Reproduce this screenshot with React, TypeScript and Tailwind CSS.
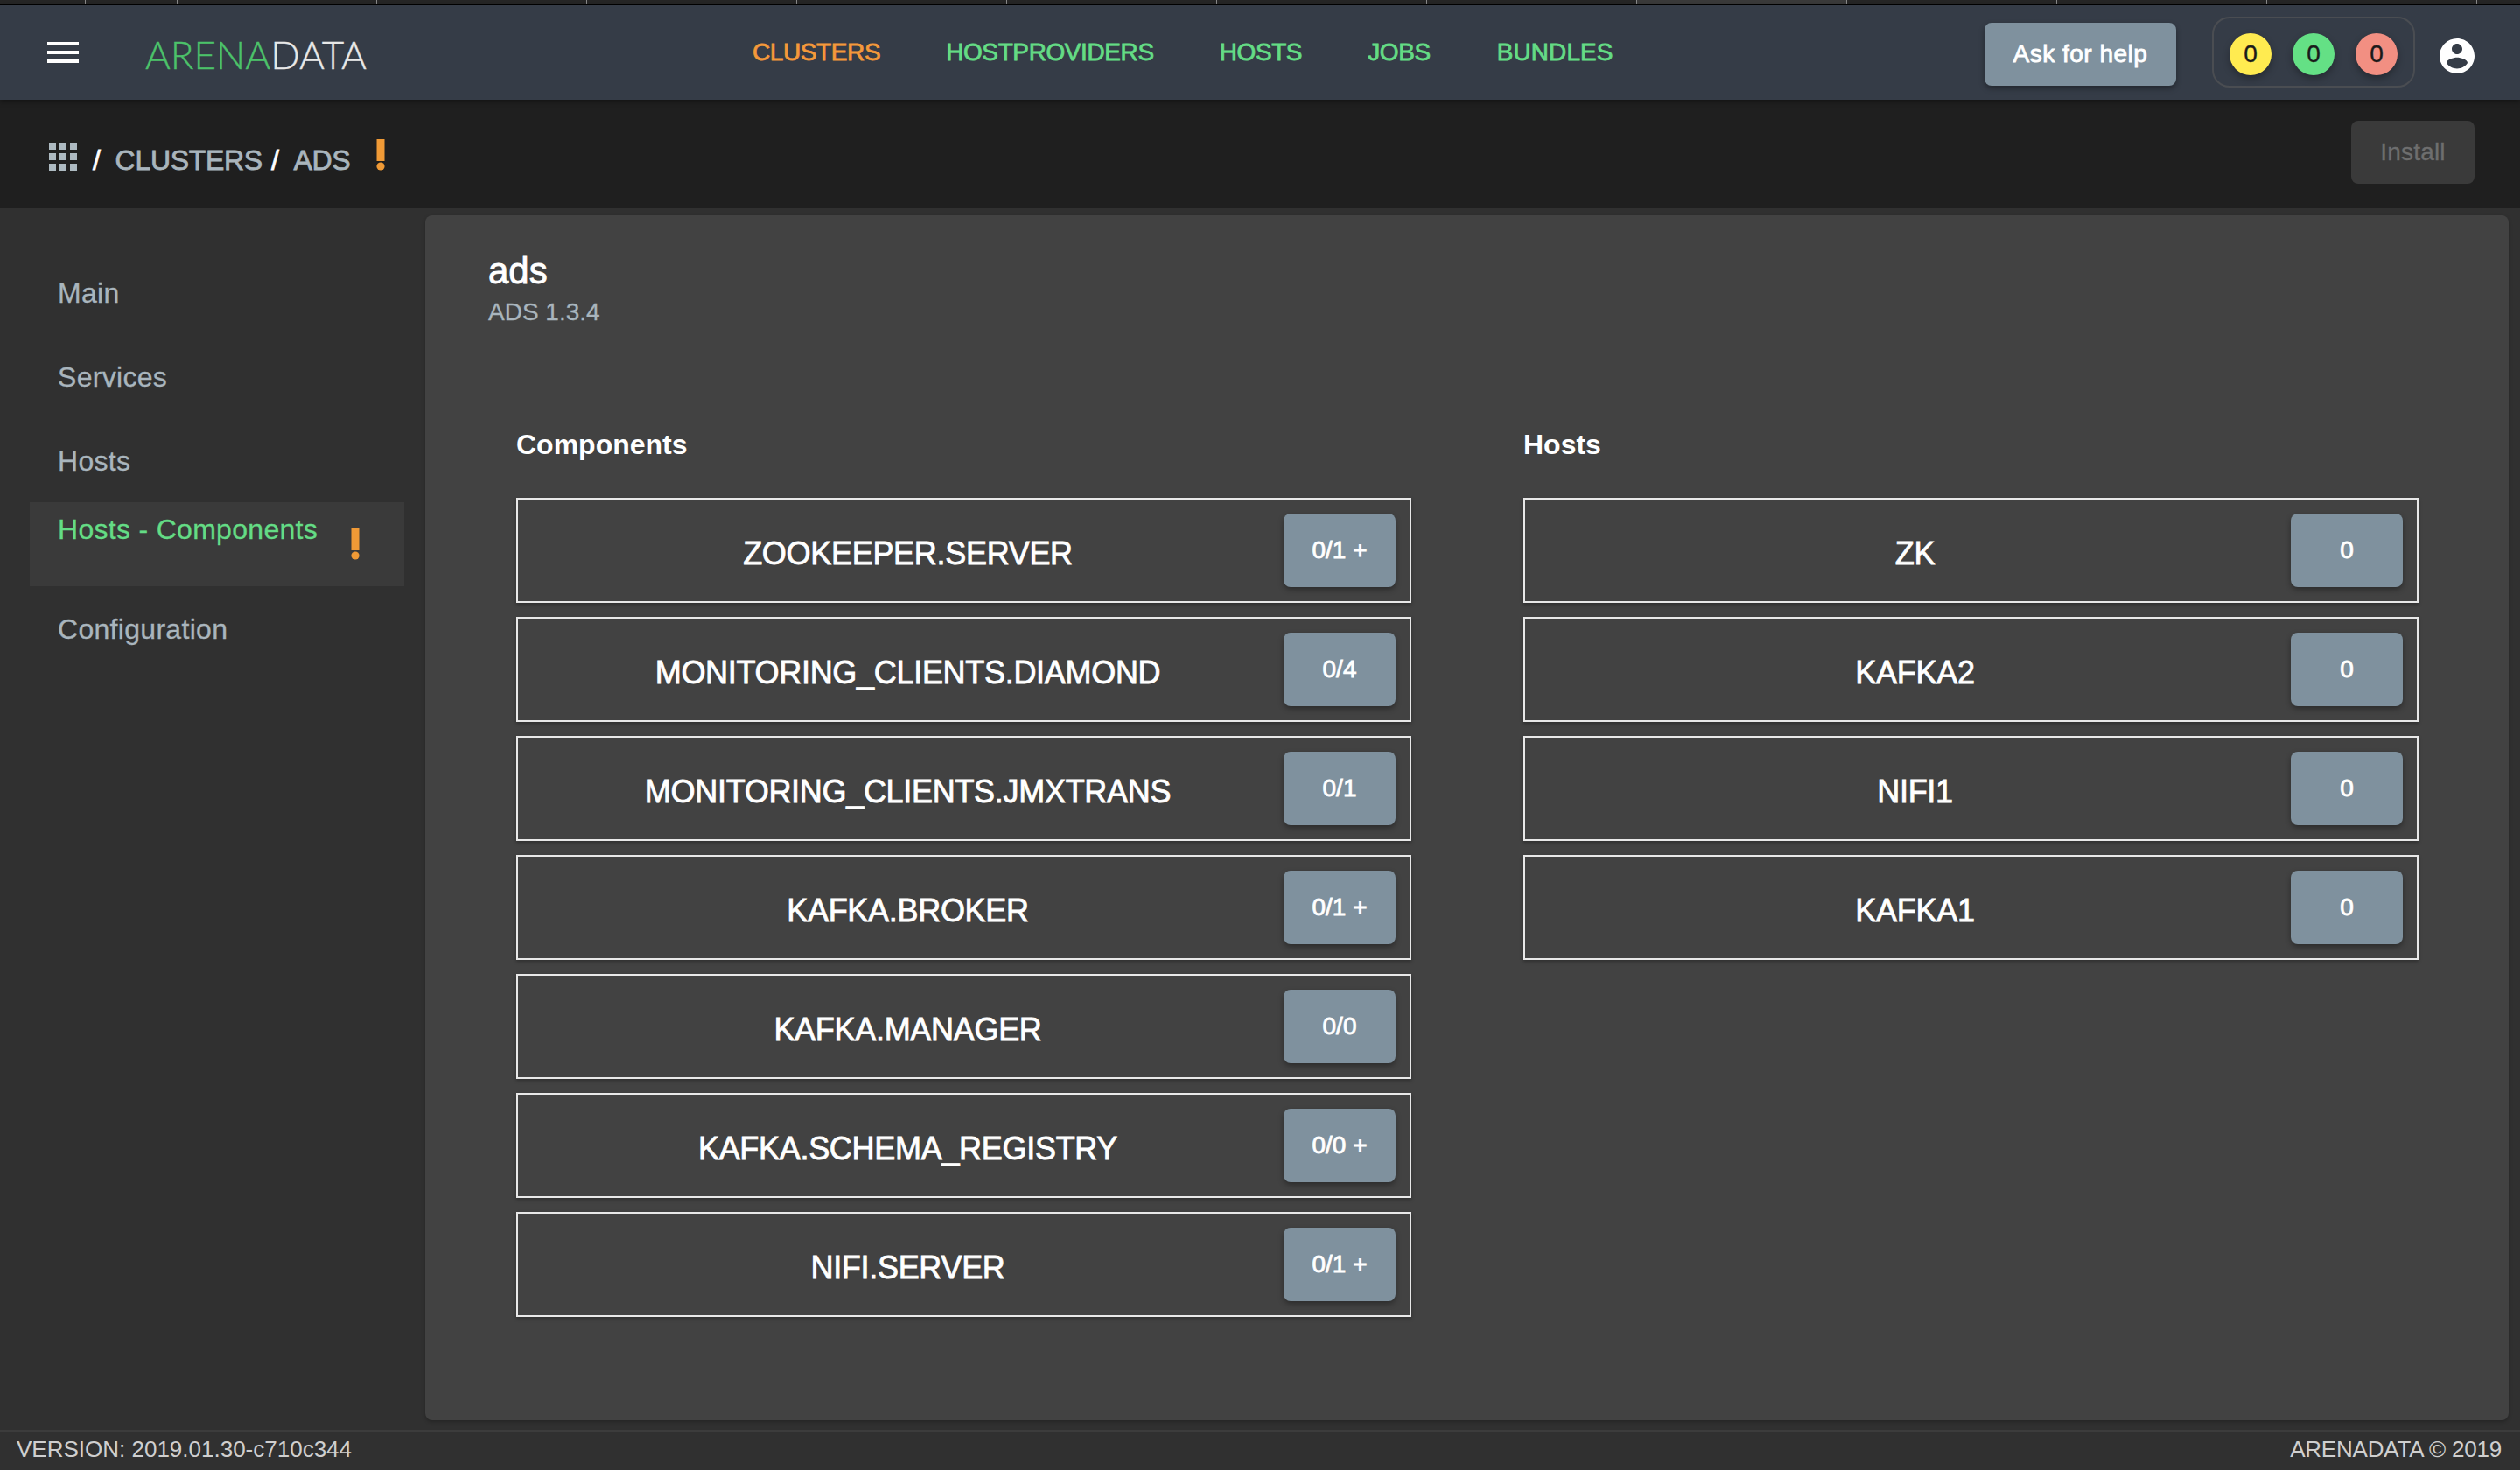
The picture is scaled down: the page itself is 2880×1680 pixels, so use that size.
const components = [
  ["ZOOKEEPER.SERVER", "0/1 +"],
  ["MONITORING_CLIENTS.DIAMOND", "0/4"],
  ["MONITORING_CLIENTS.JMXTRANS", "0/1"],
  ["KAFKA.BROKER", "0/1 +"],
  ["KAFKA.MANAGER", "0/0"],
  ["KAFKA.SCHEMA_REGISTRY", "0/0 +"],
  ["NIFI.SERVER", "0/1 +"],
];
const hosts = [["ZK", "0"], ["KAFKA2", "0"], ["NIFI1", "0"], ["KAFKA1", "0"]];
const ticks = [97, 202, 430, 670, 910, 1150, 1390, 1630, 1870, 2110, 2350, 2590, 2830];
const medium = "[-webkit-text-stroke-width:0.8px]";
const soft = "[-webkit-text-stroke-width:0.3px]";

function Bang() {
  return (
    <svg width="10" height="36" viewBox="0 0 10 36" className="block shrink-0">
      <rect x="0.5" y="0" width="9" height="25" fill="#f09a36" />
      <circle cx="5" cy="31" r="4.6" fill="#f09a36" />
    </svg>
  );
}

function Row({ name, count }: { name: string; count: string }) {
  return (
    <div className="flex h-[120px] w-[1023px] items-center border-2 border-[#e8e8e8] pl-4 pr-4 shadow-[0_2px_4px_rgba(0,0,0,0.3)]">
      <div className={`flex-1 pt-[8px] text-center text-[36px] tracking-[-0.3px] text-white ${medium}`}>{name}</div>
      <div
        className={`flex h-[84px] min-w-[128px] items-center justify-center rounded-lg bg-[#7f919e] px-8 text-[28px] text-white shadow-[0_3px_6px_rgba(0,0,0,0.35)] ${medium}`}
      >
        {count}
      </div>
    </div>
  );
}

function Dot({ color }: { color: string }) {
  return (
    <div
      className={`flex h-12 w-12 items-center justify-center rounded-full text-[28px] text-[#1a1a1a] shadow-[0_4px_8px_rgba(0,0,0,0.3)] ${soft} ${color}`}
    >
      0
    </div>
  );
}

function NavItem({ label }: { label: string }) {
  return <div className={`flex h-24 items-center pl-8 text-[32px] tracking-[0.3px] text-[#a9b5bd] ${soft}`}>{label}</div>;
}

export default function App() {
  return (
    <div className="flex h-screen flex-col overflow-hidden bg-[#303030] font-['Liberation_Sans',Arial,sans-serif]">
      <svg width="2880" height="5" className="block shrink-0 bg-[#262626]">
        <rect x="1870" y="0" width="240" height="5" fill="#3a3a3a" />
        {ticks.map((x) => (
          <rect key={x} x={x} y="0" width="1" height="5" fill="#8a8a8a" />
        ))}
      </svg>
      <header className="relative z-10 flex h-[109px] shrink-0 items-center border-t border-black bg-[#353c47] shadow-[0_2px_6px_rgba(0,0,0,0.4)]">
        <svg width="36" height="24" viewBox="0 0 36 24" className="ml-[54px] block">
          <rect y="0" width="36" height="4" fill="#fff" />
          <rect y="10" width="36" height="4" fill="#fff" />
          <rect y="20" width="36" height="4" fill="#fff" />
        </svg>
        <div className={`ml-[76px] w-[252px] translate-y-[2px] font-['Lato',sans-serif] text-[44px] font-light leading-none ${soft}`}>
          <span className="text-[#4cc26a]">ARENA</span>
          <span className="text-[#e8e8e8]">DATA</span>
        </div>
        <nav className={`ml-[442px] flex gap-[75px] text-[28px] tracking-[-0.4px] text-[#64dc85] ${medium}`}>
          <span className="text-[#f4993a]">CLUSTERS</span>
          <span>HOSTPROVIDERS</span>
          <span>HOSTS</span>
          <span>JOBS</span>
          <span className="ml-[1px] tracking-[0.1px]">BUNDLES</span>
        </nav>
        <div className="ml-auto flex translate-y-[2px] items-center pr-[48px]">
          <div
            className={`flex h-[72px] w-[219px] items-center justify-center rounded-lg bg-[#7f919e] text-[28px] tracking-[0.5px] text-white shadow-[0_3px_6px_rgba(0,0,0,0.35)] ${medium}`}
          >
            Ask for help
          </div>
          <div className="ml-[41px] flex h-[81px] w-[232px] -translate-y-[3px] items-center justify-center gap-6 rounded-[20px] border-2 border-[#4a4d52] pt-[6px]">
            <Dot color="bg-[#ffeb50]" />
            <Dot color="bg-[#64e085]" />
            <Dot color="bg-[#f28f82]" />
          </div>
          <svg width="48" height="48" viewBox="0 0 24 24" fill="#fff" className="ml-6 block translate-y-[2px]">
            <path d="M12 2C6.48 2 2 6.48 2 12s4.48 10 10 10 10-4.48 10-10S17.52 2 12 2zm0 3c1.66 0 3 1.34 3 3s-1.34 3-3 3-3-1.34-3-3 1.34-3 3-3zm0 14.2c-2.5 0-4.71-1.28-6-3.22.03-1.99 4-3.08 6-3.08 1.99 0 5.97 1.09 6 3.08-1.29 1.94-3.5 3.22-6 3.22z" />
          </svg>
        </div>
      </header>
      <div className="flex h-[124px] shrink-0 items-center bg-[#1f1f1f] pl-[56px] pr-[52px]">
        <svg width="32" height="32" viewBox="0 0 32 32" fill="#adbac1" className="block translate-y-[3px]">
          <rect x="0" y="0" width="8" height="8" />
          <rect x="12" y="0" width="8" height="8" />
          <rect x="24" y="0" width="8" height="8" />
          <rect x="0" y="12" width="8" height="8" />
          <rect x="12" y="12" width="8" height="8" />
          <rect x="24" y="12" width="8" height="8" />
          <rect x="0" y="24" width="8" height="8" />
          <rect x="12" y="24" width="8" height="8" />
          <rect x="24" y="24" width="8" height="8" />
        </svg>
        <div className={`ml-[18px] flex translate-y-[7px] text-[32px] tracking-[-0.3px] text-[#a9b5bd] ${medium}`}>
          <span className="text-white">/</span>
          <span className="ml-[17px]">CLUSTERS</span>
          <span className="ml-[10px] text-white">/</span>
          <span className="ml-[17px]">ADS</span>
        </div>
        <div className="ml-[30px] translate-y-[1px]">
          <Bang />
        </div>
        <div className={`ml-auto flex h-[72px] w-[141px] -translate-y-[2px] items-center justify-center rounded-lg bg-[#3a3a3a] text-[28px] tracking-[0.2px] text-[#6e6e6e] ${soft}`}>
          Install
        </div>
      </div>
      <div className="flex min-h-0 flex-1">
        <aside className="w-[486px] shrink-0 pl-[34px] pr-6 pt-[49px]">
          <NavItem label="Main" />
          <NavItem label="Services" />
          <NavItem label="Hosts" />
          <div className={`-mt-[1px] flex h-24 items-start bg-[#3a3a3a] pl-8 pt-[7px] text-[32px] tracking-[0.3px] text-[#64dc85] ${soft}`}>
            Hosts - Components
            <span className="ml-[38px] mt-[23px]">
              <Bang />
            </span>
          </div>
          <div className="mt-[1px]">
            <NavItem label="Configuration" />
          </div>
        </aside>
        <main className="mb-[11px] mr-[13px] mt-2 flex-1 rounded-lg bg-[#424242] pl-[72px] pt-[44px] shadow-[0_2px_4px_rgba(0,0,0,0.25)]">
          <div className={`text-[42px] leading-[40px] text-white ${medium}`}>ads</div>
          <div className={`mt-[11px] text-[28px] leading-[32px] text-[#a9b5bd] ${soft}`}>ADS 1.3.4</div>
          <div className="ml-8 mt-[114px] flex gap-[128px]">
            <section>
              <h2 className="translate-y-[1px] text-[32px] font-bold leading-[40px] text-white">Components</h2>
              <div className="mt-[42px] flex flex-col gap-4">
                {components.map(([n, c]) => (
                  <Row key={n} name={n} count={c} />
                ))}
              </div>
            </section>
            <section>
              <h2 className="translate-y-[1px] text-[32px] font-bold leading-[40px] text-white">Hosts</h2>
              <div className="mt-[42px] flex flex-col gap-4">
                {hosts.map(([n, c]) => (
                  <Row key={n} name={n} count={c} />
                ))}
              </div>
            </section>
          </div>
        </main>
      </div>
      <footer className="flex h-[46px] shrink-0 items-center justify-between border-t-2 border-[#3c3c3c] pb-[3px] pl-[19px] pr-[21px] text-[26px] text-[#cfcfcf]">
        <span>VERSION: 2019.01.30-c710c344</span>
        <span className="tracking-[-0.2px]">ARENADATA © 2019</span>
      </footer>
    </div>
  );
}
